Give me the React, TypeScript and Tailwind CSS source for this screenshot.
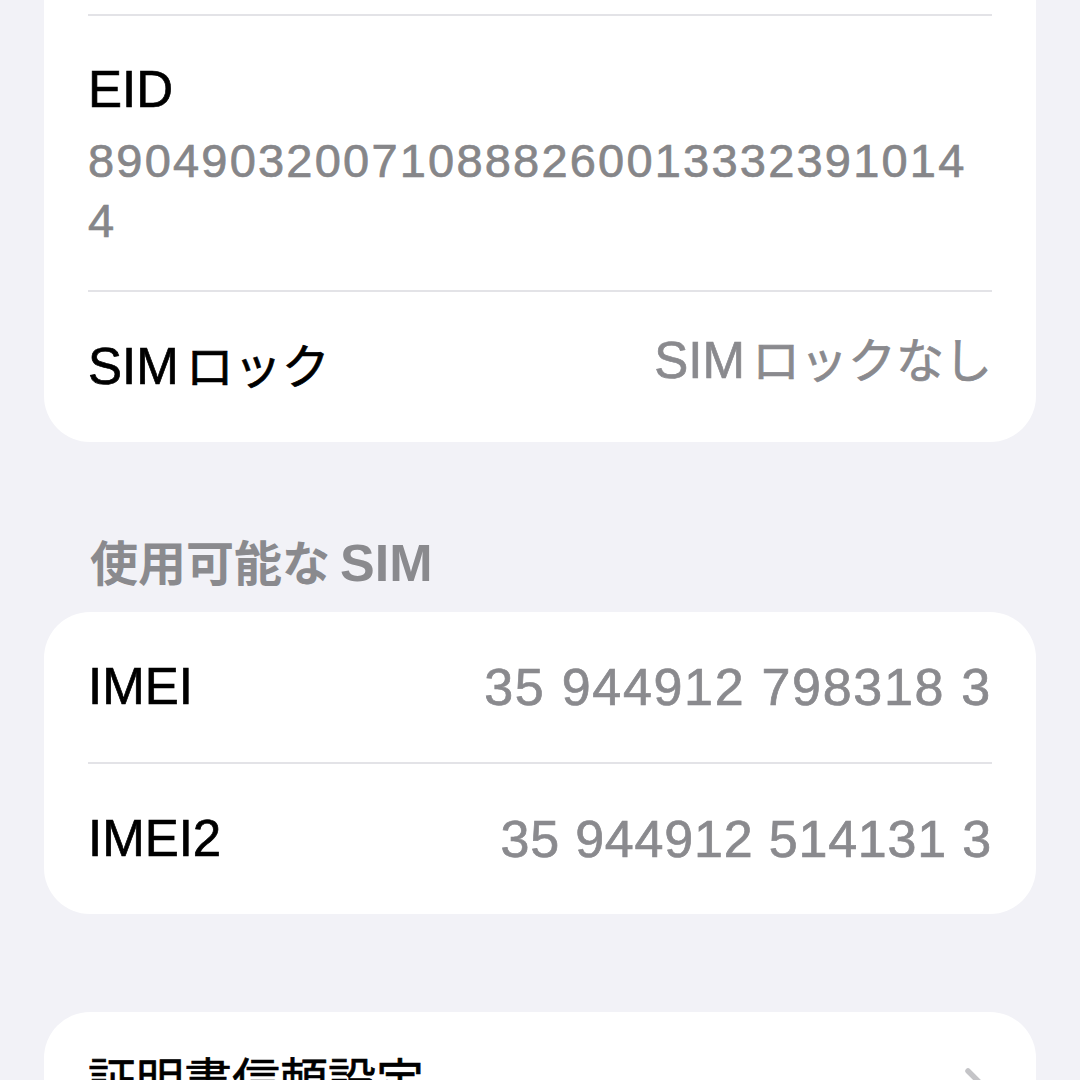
import type { ReactNode } from 'react'

const EID = '89049032007108882600133323910144'

function Ja({ children, className = '' }: { children: ReactNode; className?: string }) {
  return <span className={`text-[48px] ${className}`}>{children}</span>
}

function Separator() {
  return <div className="mx-[44px] h-[2px] bg-[#e3e3e7]" />
}

function Row({ label, value, valueClass = '' }: { label: ReactNode; value: ReactNode; valueClass?: string }) {
  return (
    <div className="flex h-[150px] items-center justify-between px-[44px] leading-[60px] [-webkit-text-stroke:0.7px]">
      <div className="text-[51px] text-black">{label}</div>
      <div className={`text-[#8a8a8e] ${valueClass}`}>{value}</div>
    </div>
  )
}

function Chevron() {
  return (
    <svg width="24" height="40" viewBox="0 0 24 40" fill="none" stroke="#c4c4c7" strokeWidth="5.5" strokeLinecap="round" strokeLinejoin="round">
      <polyline points="4 4 20 20 4 36" />
    </svg>
  )
}

export default function App() {
  return (
    <div className="h-[1080px] overflow-hidden bg-[#f2f2f7] px-[44px] font-['Liberation_Sans','Noto_Sans_CJK_JP',sans-serif]">
      {/* device info card, scrolled so only its lower rows show */}
      <div className="rounded-b-[46px] bg-white">
        <div className="h-[14px]" />
        <Separator />
        <div className="px-[44px] pt-[44px] pb-[39px] [-webkit-text-stroke:0.7px]">
          <div className="text-[51px] leading-[60px] text-black">EID</div>
          <div className="mt-[11px] text-[47px] leading-[60px] tracking-[2.2px] text-[#868689]">
            {EID.slice(0, 31)}
            <br />
            {EID.slice(31)}
          </div>
        </div>
        <Separator />
        <Row
          label={<>SIM<Ja className="ml-[7px]">ロック</Ja></>}
          value={<span className="text-[51px]">SIM<Ja className="ml-[7px]">ロックなし</Ja></span>}
        />
      </div>

      <div className="pt-[96px] pb-[22px] pl-[46px] text-[52px] leading-[50px] font-bold text-[#8a8a8e]">
        <Ja>使用可能な</Ja>
        <span className="ml-[10px]">SIM</span>
      </div>

      <div className="rounded-[46px] bg-white">
        <Row label="IMEI" value="35 944912 798318 3" valueClass="text-[52px] tracking-[1.7px]" />
        <Separator />
        <Row label="IMEI2" value="35 944912 514131 3" valueClass="text-[52px] tracking-[0.8px]" />
      </div>

      <div className="mt-[98px] rounded-t-[46px] bg-white">
        <div className="flex h-[150px] items-center justify-between pl-[44px] pr-[48px] leading-[60px] [-webkit-text-stroke:0.7px]">
          <div className="text-black">
            <Ja>証明書信頼設定</Ja>
          </div>
          <Chevron />
        </div>
      </div>
    </div>
  )
}
